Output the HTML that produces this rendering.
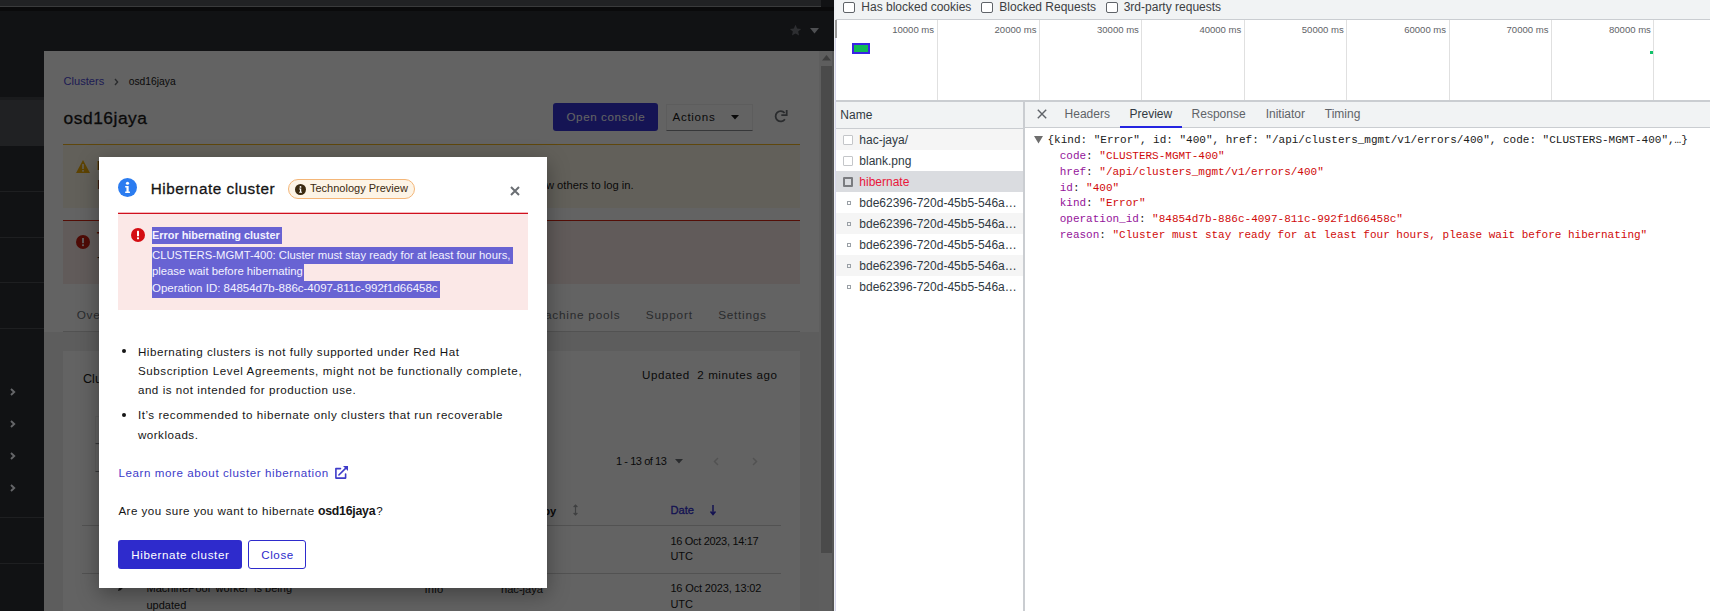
<!DOCTYPE html>
<html><head><meta charset="utf-8"><title>Hibernate cluster</title>
<style>
html,body{margin:0;padding:0;width:1710px;height:611px;overflow:hidden;background:#fff;font-family:"Liberation Sans",sans-serif}
.r{position:absolute}
.t{position:absolute;white-space:pre}
b{font-weight:700}
</style></head><body>
<div class="r" style="left:0px;top:0px;width:834.00px;height:51.00px;background:#111214"></div>
<div class="r" style="left:0px;top:0px;width:821.00px;height:6.00px;background:#212224"></div>
<div class="r" style="left:0px;top:6px;width:821.00px;height:1.00px;background:#3a3b3c"></div>
<div class="r" style="left:0px;top:7px;width:834.00px;height:4.00px;background:#0a0a0b"></div>
<svg class="r" style="left:789px;top:24px" width="13" height="13" viewBox="0 0 24 24"><path fill="#2d2e31" d="M12 1.5l3.1 7 7.4.6-5.6 4.9 1.7 7.4L12 17.5l-6.6 3.9 1.7-7.4L1.5 9.1l7.4-.6z"/></svg>
<svg class="r" style="left:810px;top:28px" width="9" height="6" viewBox="0 0 9 6"><path fill="#4e4f52" d="M0 0h9L4.5 5.5z"/></svg>
<div class="r" style="left:0px;top:51px;width:44.00px;height:560.00px;background:#111214"></div>
<div class="r" style="left:0px;top:97px;width:44.00px;height:3.00px;background:#1a1b1d"></div>
<div class="r" style="left:0px;top:100px;width:44.00px;height:46.00px;background:#202123"></div>
<div class="r" style="left:0px;top:191px;width:44.00px;height:1.00px;background:#1e1f21"></div>
<div class="r" style="left:0px;top:237px;width:44.00px;height:1.00px;background:#1e1f21"></div>
<div class="r" style="left:0px;top:282px;width:44.00px;height:1.00px;background:#1e1f21"></div>
<div class="r" style="left:0px;top:328px;width:44.00px;height:1.00px;background:#1e1f21"></div>
<div class="r" style="left:0px;top:517px;width:44.00px;height:1.00px;background:#1e1f21"></div>
<div class="r" style="left:0px;top:563px;width:44.00px;height:1.00px;background:#1e1f21"></div>
<svg class="r" style="left:10px;top:387.5px" width="6" height="8" viewBox="0 0 6 8"><path d="M1 1l3.2 3L1 7" stroke="#656669" stroke-width="1.9" fill="none"/></svg>
<svg class="r" style="left:10px;top:419.7px" width="6" height="8" viewBox="0 0 6 8"><path d="M1 1l3.2 3L1 7" stroke="#656669" stroke-width="1.9" fill="none"/></svg>
<svg class="r" style="left:10px;top:451.7px" width="6" height="8" viewBox="0 0 6 8"><path d="M1 1l3.2 3L1 7" stroke="#656669" stroke-width="1.9" fill="none"/></svg>
<svg class="r" style="left:10px;top:483.9px" width="6" height="8" viewBox="0 0 6 8"><path d="M1 1l3.2 3L1 7" stroke="#656669" stroke-width="1.9" fill="none"/></svg>
<div class="r" style="left:44px;top:51px;width:790.00px;height:560.00px;background:#f0f0f0"></div>
<div class="r" style="left:44px;top:51px;width:775.00px;height:281.00px;background:#ffffff"></div>
<div class="r" style="left:63px;top:331px;width:737.00px;height:1.00px;background:#d2d2d2"></div>
<div class="t" style="left:63.6px;top:75.80px;font-size:11.1px;line-height:11.1px;color:#4a46d6;font-weight:400;font-family:'Liberation Sans', sans-serif;">Clusters</div>
<svg class="r" style="left:114px;top:78px" width="5" height="8" viewBox="0 0 5 8"><path d="M1 1l2.6 3L1 7" stroke="#6a6e73" stroke-width="1.4" fill="none"/></svg>
<div class="t" style="left:128.7px;top:77.28px;font-size:10.3px;line-height:10.3px;color:#151515;font-weight:400;font-family:'Liberation Sans', sans-serif;">osd16jaya</div>
<div class="t" style="left:63.6px;top:110.27px;font-size:17.4px;line-height:17.4px;color:#151515;font-weight:400;font-family:'Liberation Sans', sans-serif;letter-spacing:0.509px;-webkit-text-stroke:0.3px #151515">osd16jaya</div>
<div class="r" style="left:553px;top:103px;width:105.00px;height:28.00px;background:#3230d8;border-radius:3px"></div>
<div class="t" style="left:566.5px;top:111.18px;font-size:11.6px;line-height:11.6px;color:#ffffff;font-weight:400;font-family:'Liberation Sans', sans-serif;letter-spacing:0.601px;">Open console</div>
<div class="r" style="left:666px;top:103.5px;width:87.00px;height:27.50px;box-sizing:border-box;border:1px solid #f0f0f0;border-bottom-color:#8a8d90;background:#fff"></div>
<div class="t" style="left:672.5px;top:111.18px;font-size:11.6px;line-height:11.6px;color:#151515;font-weight:400;font-family:'Liberation Sans', sans-serif;letter-spacing:0.693px;">Actions</div>
<svg class="r" style="left:730.5px;top:114.8px" width="8" height="5" viewBox="0 0 8 5"><path fill="#151515" d="M0 0h8L4 4.5z"/></svg>
<svg class="r" style="left:773px;top:109px" width="16" height="16" viewBox="0 0 16 16"><path d="M11.9 10.2A5.1 5.1 0 1 1 11.6 4" stroke="#6a6e73" stroke-width="1.8" fill="none"/><path d="M8.3 6.2h5.4V.9" stroke="#6a6e73" stroke-width="1.8" fill="none"/></svg>
<div class="r" style="left:63px;top:144px;width:737.00px;height:64.00px;background:#fdf7e7;border-top:1px solid #f4b61c;box-sizing:border-box"></div>
<svg class="r" style="left:76px;top:160px" width="14" height="13" viewBox="0 0 14 13"><path fill="#f0ab00" d="M7 0l7 13H0z"/><rect x="6.2" y="4" width="1.6" height="5" fill="#fdf7e7"/><rect x="6.2" y="10" width="1.6" height="1.6" fill="#fdf7e7"/></svg>
<div class="t" style="left:97.0px;top:159.66px;font-size:12.8px;line-height:12.8px;color:#795600;font-weight:700;font-family:'Liberation Sans', sans-serif;">F</div>
<div class="t" style="left:97.0px;top:178.66px;font-size:12.8px;line-height:12.8px;color:#151515;font-weight:400;font-family:'Liberation Sans', sans-serif;">I</div>
<div class="t" style="right:1076.4px;top:180.32px;font-size:11.2px;line-height:11.2px;color:#151515;font-weight:400;font-family:'Liberation Sans', sans-serif;">allow others to log in.</div>
<div class="r" style="left:63px;top:220px;width:737.00px;height:64.00px;background:#faeae8;border-top:1px solid #d8200f;box-sizing:border-box"></div>
<svg class="r" style="left:76px;top:235px" width="14" height="14" viewBox="0 0 14 14"><circle cx="7" cy="7" r="7" fill="#c9190b"/><rect x="6.1" y="3" width="1.8" height="5.2" fill="#fff"/><rect x="6.1" y="9.3" width="1.8" height="1.8" fill="#fff"/></svg>
<div class="t" style="left:97.0px;top:231.16px;font-size:12.8px;line-height:12.8px;color:#a30000;font-weight:700;font-family:'Liberation Sans', sans-serif;">T</div>
<div class="t" style="left:97.0px;top:251.16px;font-size:12.8px;line-height:12.8px;color:#151515;font-weight:400;font-family:'Liberation Sans', sans-serif;">-</div>
<div class="t" style="left:76.7px;top:309.91px;font-size:11.8px;line-height:11.8px;color:#6a6e73;font-weight:400;font-family:'Liberation Sans', sans-serif;letter-spacing:0.75px;">Overview</div>
<div class="t" style="right:1089.7px;top:309.91px;font-size:11.8px;line-height:11.8px;color:#6a6e73;font-weight:400;font-family:'Liberation Sans', sans-serif;letter-spacing:0.75px">Machine pools</div>
<div class="t" style="left:645.8px;top:309.91px;font-size:11.8px;line-height:11.8px;color:#6a6e73;font-weight:400;font-family:'Liberation Sans', sans-serif;letter-spacing:0.812px;">Support</div>
<div class="t" style="left:718.2px;top:309.91px;font-size:11.8px;line-height:11.8px;color:#6a6e73;font-weight:400;font-family:'Liberation Sans', sans-serif;letter-spacing:0.723px;">Settings</div>
<div class="r" style="left:63px;top:351px;width:737.00px;height:260.00px;background:#ffffff"></div>
<div class="t" style="left:83.0px;top:373.33px;font-size:12.6px;line-height:12.6px;color:#151515;font-weight:400;font-family:'Liberation Sans', sans-serif;">Cluster history</div>
<div class="t" style="left:642.0px;top:369.18px;font-size:11.6px;line-height:11.6px;color:#151515;font-weight:400;font-family:'Liberation Sans', sans-serif;letter-spacing:0.563px;">Updated  2 minutes ago</div>
<div class="r" style="left:95px;top:415.5px;width:205.00px;height:28.00px;box-sizing:border-box;border:1px solid #f0f0f0;border-bottom-color:#8a8d90"></div>
<div class="r" style="left:95px;top:443.5px;width:205.00px;height:28.00px;box-sizing:border-box;border:1px solid #f0f0f0;border-bottom-color:#8a8d90"></div>
<div class="t" style="left:616.1px;top:456.49px;font-size:11px;line-height:11px;color:#151515;font-weight:400;font-family:'Liberation Sans', sans-serif;letter-spacing:-0.45px;">1 - 13 of 13</div>
<svg class="r" style="left:675px;top:459px" width="8" height="5" viewBox="0 0 8 5"><path fill="#6a6e73" d="M0 0h8L4 4.5z"/></svg>
<svg class="r" style="left:713px;top:457px" width="6" height="9" viewBox="0 0 6 9"><path d="M5 1L1.5 4.5 5 8" stroke="#d2d2d2" stroke-width="1.5" fill="none"/></svg>
<svg class="r" style="left:752px;top:457px" width="6" height="9" viewBox="0 0 6 9"><path d="M1 1l3.5 3.5L1 8" stroke="#d2d2d2" stroke-width="1.5" fill="none"/></svg>
<div class="t" style="right:1153.7px;top:505.72px;font-size:11.2px;line-height:11.2px;color:#151515;font-weight:700;font-family:'Liberation Sans', sans-serif;">Created by</div>
<svg class="r" style="left:572px;top:503.5px" width="7" height="12" viewBox="0 0 7 12"><path d="M3.5 1.2v9.6M1.6 3L3.5 1.2 5.4 3M1.6 9L3.5 10.8 5.4 9" stroke="#a0a3a6" stroke-width="1.2" fill="none"/></svg>
<div class="t" style="left:670.4px;top:504.72px;font-size:11.2px;line-height:11.2px;color:#2f2cd0;font-weight:400;font-family:'Liberation Sans', sans-serif;-webkit-text-stroke:0.3px #2f2cd0">Date</div>
<svg class="r" style="left:709px;top:503.5px" width="8" height="12" viewBox="0 0 8 12"><path d="M4 1v9.5M1.5 7.5L4 10.5 6.5 7.5" stroke="#2f2cd0" stroke-width="1.5" fill="none"/></svg>
<div class="r" style="left:82px;top:525px;width:699.00px;height:1.00px;background:#d2d2d2"></div>
<div class="t" style="left:670.4px;top:535.89px;font-size:11px;line-height:11px;color:#151515;font-weight:400;font-family:'Liberation Sans', sans-serif;letter-spacing:-0.31px;">16 Oct 2023, 14:17</div>
<div class="t" style="left:670.4px;top:551.29px;font-size:11px;line-height:11px;color:#151515;font-weight:400;font-family:'Liberation Sans', sans-serif;">UTC</div>
<div class="r" style="left:82px;top:573px;width:699.00px;height:1.00px;background:#d2d2d2"></div>
<svg class="r" style="left:117px;top:583px" width="9" height="9" viewBox="0 0 10 10"><path d="M1 9l1-3 5-5 2 2-5 5z" fill="#333"/></svg>
<div class="t" style="left:146.5px;top:583.19px;font-size:11px;line-height:11px;color:#151515;font-weight:400;font-family:'Liberation Sans', sans-serif;">MachinePool ‘worker’ is being</div>
<div class="t" style="left:146.5px;top:599.79px;font-size:11px;line-height:11px;color:#151515;font-weight:400;font-family:'Liberation Sans', sans-serif;">updated</div>
<div class="t" style="left:424.6px;top:583.52px;font-size:11.2px;line-height:11.2px;color:#151515;font-weight:400;font-family:'Liberation Sans', sans-serif;">Info</div>
<div class="t" style="left:501.0px;top:583.60px;font-size:11.1px;line-height:11.1px;color:#151515;font-weight:400;font-family:'Liberation Sans', sans-serif;">hac-jaya</div>
<div class="t" style="left:670.4px;top:583.29px;font-size:11px;line-height:11px;color:#151515;font-weight:400;font-family:'Liberation Sans', sans-serif;letter-spacing:-0.15px;">16 Oct 2023, 13:02</div>
<div class="t" style="left:670.4px;top:598.89px;font-size:11px;line-height:11px;color:#151515;font-weight:400;font-family:'Liberation Sans', sans-serif;">UTC</div>
<div class="r" style="left:44px;top:51px;width:790.00px;height:560.00px;background:rgba(3,3,3,0.62)"></div>
<div class="r" style="left:819px;top:51px;width:15.00px;height:560.00px;background:#5e5e5e"></div>
<div class="r" style="left:832px;top:51px;width:2.00px;height:560.00px;background:#555555"></div>
<svg class="r" style="left:822px;top:55px" width="9" height="6" viewBox="0 0 9 6"><path fill="#3e3e3e" d="M4.5 0L9 5.5H0z"/></svg>
<div class="r" style="left:821px;top:66px;width:11.00px;height:487.00px;background:#4a4a4a"></div>
<div class="r" style="left:99px;top:157px;width:448px;height:431px;background:#fff;box-shadow:0 6px 20px rgba(0,0,0,0.35)"></div>
<svg class="r" style="left:118px;top:178px" width="19" height="19" viewBox="0 0 18 18"><circle cx="9" cy="9" r="9" fill="#2b7cf0"/><circle cx="9" cy="5" r="1.5" fill="#fff"/><path fill="#fff" d="M6.8 7.5h3.3v5.2h1.2v1.6H6.8v-1.6H8V9.1H6.8z"/></svg>
<div class="t" style="left:150.7px;top:181.45px;font-size:15.3px;line-height:15.3px;color:#151515;font-weight:400;font-family:'Liberation Sans', sans-serif;letter-spacing:0.521px;-webkit-text-stroke:0.3px #151515">Hibernate cluster</div>
<div class="r" style="left:288px;top:179px;width:127.00px;height:20.00px;box-sizing:border-box;border:1px solid #f4b678;border-radius:10px;background:#fdf4e6"></div>
<svg class="r" style="left:295px;top:183.5px" width="11" height="11" viewBox="0 0 12 12"><circle cx="6" cy="6" r="6" fill="#3b2a10"/><circle cx="6" cy="3.2" r="1" fill="#fff"/><path fill="#fff" d="M4.6 4.9h2.2v3.6h.8v1.1H4.6V8.5h.8V6h-.8z"/></svg>
<div class="t" style="left:310.0px;top:183.39px;font-size:11px;line-height:11px;color:#3b2a10;font-weight:400;font-family:'Liberation Sans', sans-serif;">Technology Preview</div>
<svg class="r" style="left:510px;top:186px" width="10" height="10" viewBox="0 0 10 10"><path d="M1 1l8 8M9 1l-8 8" stroke="#6a6e73" stroke-width="2"/></svg>
<div class="r" style="left:118px;top:213px;width:410.00px;height:97.00px;background:#fbe8e7;border-top:1px solid #d0101e;box-sizing:border-box"></div>
<div class="r" style="left:118px;top:212px;width:410.00px;height:1.00px;background:#f4b8bc"></div>
<svg class="r" style="left:131px;top:228px" width="14" height="14" viewBox="0 0 14 14"><circle cx="7" cy="7" r="7" fill="#d40d12"/><rect x="6" y="2.8" width="2" height="5.4" rx=".5" fill="#fff"/><rect x="6" y="9.3" width="2" height="2" rx=".5" fill="#fff"/></svg>
<div class="r" style="left:152px;top:227px;width:130.00px;height:17.00px;background:#6863d3"></div>
<div class="r" style="left:152px;top:247px;width:361.00px;height:17.00px;background:#6863d3"></div>
<div class="r" style="left:152px;top:264px;width:151.50px;height:17.00px;background:#6863d3"></div>
<div class="r" style="left:152px;top:281px;width:288.00px;height:17.00px;background:#6863d3"></div>
<div class="t" style="left:152.0px;top:229.67px;font-size:10.9px;line-height:10.9px;color:#f3f2ff;font-weight:700;font-family:'Liberation Sans', sans-serif;">Error hibernating cluster</div>
<div class="t" style="left:152.0px;top:249.63px;font-size:11.3px;line-height:11.3px;color:#f3f2ff;font-weight:400;font-family:'Liberation Sans', sans-serif;">CLUSTERS-MGMT-400: Cluster must stay ready for at least four hours,</div>
<div class="t" style="left:152.0px;top:266.33px;font-size:11.3px;line-height:11.3px;color:#f3f2ff;font-weight:400;font-family:'Liberation Sans', sans-serif;">please wait before hibernating</div>
<div class="t" style="left:152.0px;top:283.07px;font-size:11.5px;line-height:11.5px;color:#f3f2ff;font-weight:400;font-family:'Liberation Sans', sans-serif;">Operation ID: 84854d7b-886c-4097-811c-992f1d66458c</div>
<div class="r" style="left:121.7px;top:349.3px;width:4.00px;height:4.00px;background:#151515;border-radius:50%"></div>
<div class="r" style="left:121.7px;top:412.9px;width:4.00px;height:4.00px;background:#151515;border-radius:50%"></div>
<div class="t" style="left:137.9px;top:345.58px;font-size:11.6px;line-height:11.6px;color:#151515;font-weight:400;font-family:'Liberation Sans', sans-serif;letter-spacing:0.543px;">Hibernating clusters is not fully supported under Red Hat</div>
<div class="t" style="left:137.9px;top:364.98px;font-size:11.6px;line-height:11.6px;color:#151515;font-weight:400;font-family:'Liberation Sans', sans-serif;letter-spacing:0.599px;">Subscription Level Agreements, might not be functionally complete,</div>
<div class="t" style="left:137.9px;top:384.28px;font-size:11.6px;line-height:11.6px;color:#151515;font-weight:400;font-family:'Liberation Sans', sans-serif;letter-spacing:0.544px;">and is not intended for production use.</div>
<div class="t" style="left:137.9px;top:409.18px;font-size:11.6px;line-height:11.6px;color:#151515;font-weight:400;font-family:'Liberation Sans', sans-serif;letter-spacing:0.543px;">It’s recommended to hibernate only clusters that run recoverable</div>
<div class="t" style="left:137.9px;top:428.68px;font-size:11.6px;line-height:11.6px;color:#151515;font-weight:400;font-family:'Liberation Sans', sans-serif;letter-spacing:0.506px;">workloads.</div>
<div class="t" style="left:118.4px;top:467.38px;font-size:11.6px;line-height:11.6px;color:#3e3bc9;font-weight:400;font-family:'Liberation Sans', sans-serif;letter-spacing:0.58px;">Learn more about cluster hibernation</div>
<svg class="r" style="left:334px;top:465px" width="15" height="15" viewBox="0 0 15 15"><path d="M6.5 3.6H1.9v9.5h9.7V9" stroke="#3e3bc9" stroke-width="1.6" stroke-linecap="round" stroke-linejoin="round" fill="none"/><path d="M4.9 10L12.3 2.6" stroke="#3e3bc9" stroke-width="1.6" stroke-linecap="round"/><path d="M9 1h5v5z" fill="#3e3bc9"/></svg>
<div class="t" style="left:118.4px;top:505.38px;font-size:11.6px;line-height:11.6px;color:#151515;font-weight:400;font-family:'Liberation Sans', sans-serif;letter-spacing:0.484px;">Are you sure you want to hibernate </div>
<div class="t" style="left:318.0px;top:504.79px;font-size:12.3px;line-height:12.3px;color:#151515;font-weight:700;font-family:'Liberation Sans', sans-serif;letter-spacing:-0.249px;">osd16jaya</div>
<div class="t" style="left:376.3px;top:505.38px;font-size:11.6px;line-height:11.6px;color:#151515;font-weight:400;font-family:'Liberation Sans', sans-serif;">?</div>
<div class="r" style="left:118px;top:540px;width:124.00px;height:29.00px;background:#2e2bcc;border-radius:3px"></div>
<div class="t" style="left:131.2px;top:548.88px;font-size:11.6px;line-height:11.6px;color:#ffffff;font-weight:400;font-family:'Liberation Sans', sans-serif;letter-spacing:0.626px;">Hibernate cluster</div>
<div class="r" style="left:248px;top:540px;width:58.00px;height:29.00px;box-sizing:border-box;border:1px solid #2e2bcc;border-radius:3px;background:#fff"></div>
<div class="t" style="left:261.3px;top:548.88px;font-size:11.6px;line-height:11.6px;color:#2e2bcc;font-weight:400;font-family:'Liberation Sans', sans-serif;letter-spacing:0.561px;">Close</div>
<div class="r" style="left:834px;top:0px;width:876.00px;height:611.00px;background:#ffffff"></div>
<div class="r" style="left:834px;top:0px;width:2.00px;height:611.00px;background:#eceef2"></div>
<div class="r" style="left:835px;top:38px;width:1.00px;height:573.00px;background:#d6d6ec"></div>
<div class="r" style="left:836px;top:0px;width:874.00px;height:19.00px;background:#f1f3f4"></div>
<div class="r" style="left:836px;top:19px;width:874.00px;height:1.00px;background:#cacdd1"></div>
<div class="r" style="left:843px;top:1.5px;width:12.00px;height:11.50px;box-sizing:border-box;border:1px solid #5f6368;border-radius:2px;background:#fff"></div>
<div class="r" style="left:981px;top:1.5px;width:12.00px;height:11.50px;box-sizing:border-box;border:1px solid #5f6368;border-radius:2px;background:#fff"></div>
<div class="r" style="left:1106px;top:1.5px;width:12.00px;height:11.50px;box-sizing:border-box;border:1px solid #5f6368;border-radius:2px;background:#fff"></div>
<div class="t" style="left:861.3px;top:0.94px;font-size:12px;line-height:12px;color:#3c4043;font-weight:400;font-family:'Liberation Sans', sans-serif;">Has blocked cookies</div>
<div class="t" style="left:999.3px;top:0.94px;font-size:12px;line-height:12px;color:#3c4043;font-weight:400;font-family:'Liberation Sans', sans-serif;">Blocked Requests</div>
<div class="t" style="left:1123.7px;top:0.94px;font-size:12px;line-height:12px;color:#3c4043;font-weight:400;font-family:'Liberation Sans', sans-serif;">3rd-party requests</div>
<div class="r" style="left:937px;top:20px;width:1.00px;height:80.00px;background:#e0e0e0"></div>
<div class="t" style="right:775.9px;top:25.42px;font-size:9.55px;line-height:9.55px;color:#5f6368;font-weight:400;font-family:'Liberation Sans', sans-serif;">10000 ms</div>
<div class="r" style="left:1039px;top:20px;width:1.00px;height:80.00px;background:#e0e0e0"></div>
<div class="t" style="right:673.5px;top:25.42px;font-size:9.55px;line-height:9.55px;color:#5f6368;font-weight:400;font-family:'Liberation Sans', sans-serif;">20000 ms</div>
<div class="r" style="left:1141px;top:20px;width:1.00px;height:80.00px;background:#e0e0e0"></div>
<div class="t" style="right:571.1px;top:25.42px;font-size:9.55px;line-height:9.55px;color:#5f6368;font-weight:400;font-family:'Liberation Sans', sans-serif;">30000 ms</div>
<div class="r" style="left:1244px;top:20px;width:1.00px;height:80.00px;background:#e0e0e0"></div>
<div class="t" style="right:468.7px;top:25.42px;font-size:9.55px;line-height:9.55px;color:#5f6368;font-weight:400;font-family:'Liberation Sans', sans-serif;">40000 ms</div>
<div class="r" style="left:1346px;top:20px;width:1.00px;height:80.00px;background:#e0e0e0"></div>
<div class="t" style="right:366.3px;top:25.42px;font-size:9.55px;line-height:9.55px;color:#5f6368;font-weight:400;font-family:'Liberation Sans', sans-serif;">50000 ms</div>
<div class="r" style="left:1449px;top:20px;width:1.00px;height:80.00px;background:#e0e0e0"></div>
<div class="t" style="right:263.9px;top:25.42px;font-size:9.55px;line-height:9.55px;color:#5f6368;font-weight:400;font-family:'Liberation Sans', sans-serif;">60000 ms</div>
<div class="r" style="left:1551px;top:20px;width:1.00px;height:80.00px;background:#e0e0e0"></div>
<div class="t" style="right:161.5px;top:25.42px;font-size:9.55px;line-height:9.55px;color:#5f6368;font-weight:400;font-family:'Liberation Sans', sans-serif;">70000 ms</div>
<div class="r" style="left:1653px;top:20px;width:1.00px;height:80.00px;background:#e0e0e0"></div>
<div class="t" style="right:59.1px;top:25.42px;font-size:9.55px;line-height:9.55px;color:#5f6368;font-weight:400;font-family:'Liberation Sans', sans-serif;">80000 ms</div>
<div class="r" style="left:835px;top:20px;width:2.00px;height:18.00px;background:#9a9a9a"></div>
<div class="r" style="left:852px;top:43px;width:18.00px;height:10.50px;box-sizing:border-box;border:2px solid #3a23e6;background:#10bb55"></div>
<div class="r" style="left:1650px;top:51px;width:3.00px;height:3.00px;background:#12c26a"></div>
<div class="r" style="left:836px;top:100px;width:874.00px;height:2.00px;background:#cacdd1"></div>
<div class="r" style="left:836px;top:102px;width:187.00px;height:26.00px;background:#f1f3f4"></div>
<div class="r" style="left:836px;top:128px;width:187.00px;height:1.00px;background:#cacdd1"></div>
<div class="t" style="left:840.3px;top:108.64px;font-size:12px;line-height:12px;color:#303942;font-weight:400;font-family:'Liberation Sans', sans-serif;">Name</div>
<div class="r" style="left:836px;top:129px;width:187.00px;height:21.00px;background:#f5f5f5"></div>
<div class="r" style="left:843px;top:135px;width:10.00px;height:10.00px;box-sizing:border-box;border:1px solid #c4c6c9;border-radius:1px;background:#fff"></div>
<div class="t" style="left:859.3px;top:134.14px;font-size:12px;line-height:12px;color:#303942;font-weight:400;font-family:'Liberation Sans', sans-serif;">hac-jaya/</div>
<div class="r" style="left:836px;top:150px;width:187.00px;height:21.00px;background:#ffffff"></div>
<div class="r" style="left:843px;top:156px;width:10.00px;height:10.00px;box-sizing:border-box;border:1px solid #c4c6c9;border-radius:1px;background:#fff"></div>
<div class="t" style="left:859.3px;top:155.14px;font-size:12px;line-height:12px;color:#303942;font-weight:400;font-family:'Liberation Sans', sans-serif;">blank.png</div>
<div class="r" style="left:836px;top:171px;width:187.00px;height:21.00px;background:#dadce0"></div>
<div class="r" style="left:843px;top:177px;width:10.00px;height:10.00px;box-sizing:border-box;border:2px solid #7a7c80;border-radius:1px;background:#dadce0"></div>
<div class="t" style="left:859.3px;top:176.14px;font-size:12px;line-height:12px;color:#e8173b;font-weight:400;font-family:'Liberation Sans', sans-serif;">hibernate</div>
<div class="r" style="left:836px;top:192px;width:187.00px;height:21.00px;background:#ffffff"></div>
<div class="r" style="left:847px;top:201px;width:4.00px;height:4.00px;box-sizing:border-box;border:1px solid #9aa0a6"></div>
<div class="t" style="left:859.3px;top:197.14px;font-size:12px;line-height:12px;color:#303942;font-weight:400;font-family:'Liberation Sans', sans-serif;">bde62396-720d-45b5-546a…</div>
<div class="r" style="left:836px;top:213px;width:187.00px;height:21.00px;background:#f5f5f5"></div>
<div class="r" style="left:847px;top:222px;width:4.00px;height:4.00px;box-sizing:border-box;border:1px solid #9aa0a6"></div>
<div class="t" style="left:859.3px;top:218.14px;font-size:12px;line-height:12px;color:#303942;font-weight:400;font-family:'Liberation Sans', sans-serif;">bde62396-720d-45b5-546a…</div>
<div class="r" style="left:836px;top:234px;width:187.00px;height:21.00px;background:#ffffff"></div>
<div class="r" style="left:847px;top:243px;width:4.00px;height:4.00px;box-sizing:border-box;border:1px solid #9aa0a6"></div>
<div class="t" style="left:859.3px;top:239.14px;font-size:12px;line-height:12px;color:#303942;font-weight:400;font-family:'Liberation Sans', sans-serif;">bde62396-720d-45b5-546a…</div>
<div class="r" style="left:836px;top:255px;width:187.00px;height:21.00px;background:#f5f5f5"></div>
<div class="r" style="left:847px;top:264px;width:4.00px;height:4.00px;box-sizing:border-box;border:1px solid #9aa0a6"></div>
<div class="t" style="left:859.3px;top:260.14px;font-size:12px;line-height:12px;color:#303942;font-weight:400;font-family:'Liberation Sans', sans-serif;">bde62396-720d-45b5-546a…</div>
<div class="r" style="left:836px;top:276px;width:187.00px;height:21.00px;background:#ffffff"></div>
<div class="r" style="left:847px;top:285px;width:4.00px;height:4.00px;box-sizing:border-box;border:1px solid #9aa0a6"></div>
<div class="t" style="left:859.3px;top:281.14px;font-size:12px;line-height:12px;color:#303942;font-weight:400;font-family:'Liberation Sans', sans-serif;">bde62396-720d-45b5-546a…</div>
<div class="r" style="left:1023px;top:101px;width:2.00px;height:510.00px;background:#cacdd1"></div>
<div class="r" style="left:1025px;top:102px;width:685.00px;height:25.00px;background:#f1f3f4"></div>
<div class="r" style="left:1025px;top:127px;width:685.00px;height:1.00px;background:#cacdd1"></div>
<svg class="r" style="left:1037px;top:109px" width="10" height="10" viewBox="0 0 10 10"><path d="M.8 .8l8.4 8.4M9.2 .8L.8 9.2" stroke="#5f6368" stroke-width="1.4"/></svg>
<div class="t" style="left:1064.6px;top:107.64px;font-size:12px;line-height:12px;color:#5f6368;font-weight:400;font-family:'Liberation Sans', sans-serif;">Headers</div>
<div class="t" style="left:1129.5px;top:107.64px;font-size:12px;line-height:12px;color:#303942;font-weight:400;font-family:'Liberation Sans', sans-serif;">Preview</div>
<div class="t" style="left:1191.6px;top:107.64px;font-size:12px;line-height:12px;color:#5f6368;font-weight:400;font-family:'Liberation Sans', sans-serif;">Response</div>
<div class="t" style="left:1265.7px;top:107.64px;font-size:12px;line-height:12px;color:#5f6368;font-weight:400;font-family:'Liberation Sans', sans-serif;">Initiator</div>
<div class="t" style="left:1324.8px;top:107.64px;font-size:12px;line-height:12px;color:#5f6368;font-weight:400;font-family:'Liberation Sans', sans-serif;">Timing</div>
<div class="r" style="left:1120px;top:126px;width:62.00px;height:2.00px;background:#2424e0"></div>
<svg class="r" style="left:1034px;top:136px" width="9" height="8" viewBox="0 0 9 8"><path fill="#6e6e6e" d="M0 0h9L4.5 7.5z"/></svg>
<div class="t" style="left:1047.5px;top:135.29px;font-size:11px;line-height:11px;color:#202020;font-weight:400;font-family:'Liberation Mono', monospace;">{kind: "Error", id: "400", href: "/api/clusters_mgmt/v1/errors/400", code: "CLUSTERS-MGMT-400",…}</div>
<div class="t" style="left:1059.7px;top:151.09px;font-size:11px;line-height:11px;color:#202020;font-weight:400;font-family:'Liberation Mono', monospace;"><span style="color:#94139a">code</span>: <span style="color:#d00a0a">"CLUSTERS-MGMT-400"</span></div>
<div class="t" style="left:1059.7px;top:166.84px;font-size:11px;line-height:11px;color:#202020;font-weight:400;font-family:'Liberation Mono', monospace;"><span style="color:#94139a">href</span>: <span style="color:#d00a0a">"/api/clusters_mgmt/v1/errors/400"</span></div>
<div class="t" style="left:1059.7px;top:182.59px;font-size:11px;line-height:11px;color:#202020;font-weight:400;font-family:'Liberation Mono', monospace;"><span style="color:#94139a">id</span>: <span style="color:#d00a0a">"400"</span></div>
<div class="t" style="left:1059.7px;top:198.34px;font-size:11px;line-height:11px;color:#202020;font-weight:400;font-family:'Liberation Mono', monospace;"><span style="color:#94139a">kind</span>: <span style="color:#d00a0a">"Error"</span></div>
<div class="t" style="left:1059.7px;top:214.09px;font-size:11px;line-height:11px;color:#202020;font-weight:400;font-family:'Liberation Mono', monospace;"><span style="color:#94139a">operation_id</span>: <span style="color:#d00a0a">"84854d7b-886c-4097-811c-992f1d66458c"</span></div>
<div class="t" style="left:1059.7px;top:229.84px;font-size:11px;line-height:11px;color:#202020;font-weight:400;font-family:'Liberation Mono', monospace;"><span style="color:#94139a">reason</span>: <span style="color:#d00a0a">"Cluster must stay ready for at least four hours, please wait before hibernating"</span></div>
</body></html>
